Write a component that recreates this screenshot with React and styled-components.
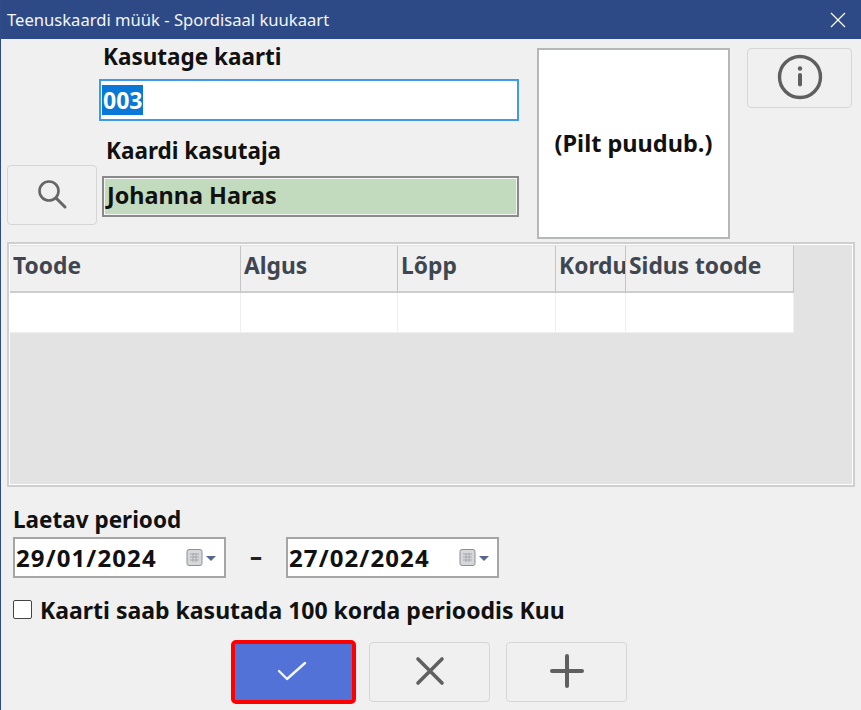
import React from "react";
import styled, { createGlobalStyle } from "styled-components";

const Global = createGlobalStyle`
  html, body { margin: 0; padding: 0; background: #f0f0f0; }
  body { font-family: "Noto Sans", "Liberation Sans", sans-serif; }
`;

const Win = styled.div`
  width: 861px; height: 710px; box-sizing: border-box; overflow: hidden;
  background: #f0f0f0; border-left: 1px solid #2f4b88;
  display: flex; flex-direction: column;
`;
const TitleBar = styled.div`
  height: 39px; flex: none; background: #2d4a87; color: #f4f6fa;
  display: flex; align-items: center; justify-content: space-between;
  padding: 0 15px 0 6px; font-size: 16.6px; box-sizing: border-box;
`;
const Close = styled.svg`width: 16px; height: 16px; display: block;`;
const Top = styled.div`
  display: flex; height: 203px; flex: none; padding: 9px 0 0 6px; box-sizing: border-box;
`;
const SearchCol = styled.div`
  width: 92px; flex: none; display: flex; flex-direction: column; justify-content: flex-end; padding-bottom: 17px;
`;
const IconButton = styled.button`
  box-sizing: border-box; width: ${p => p.$w}px; height: ${p => p.$h}px; flex: none;
  background: #f0f0f0; border: 1px solid #d6d6d6; border-radius: 4px; padding: 0 0 2px;
  display: flex; align-items: center; justify-content: center;
`;
const AddButton = styled(IconButton)`margin-left: 3px;`;
const FormCol = styled.div`
  width: 420px; flex: none; display: flex; flex-direction: column;
`;
const Label = styled.div`
  font-weight: 700; font-size: 22.5px; line-height: 18px; color: #111; padding-left: ${p => p.$pad}px;
  height: ${p => p.$h}px; margin-top: ${p => p.$mt || 0}px; white-space: nowrap;
`;
const CardInput = styled.div`
  box-sizing: border-box; height: 42px; background: #fff; border: 2px solid #3f9bea;
  display: flex; align-items: center; padding-left: 1px;
  font-weight: 700; font-size: 23px; color: #111;
`;
const Selected = styled.span`background: #0a78d7; color: #fff; line-height: 30px; padding: 0 1px;`;
const UserField = styled.div`
  box-sizing: border-box; height: 41px; margin-left: 3px; background: #c2dbbf; border: 2px solid #8a8a8a;
  box-shadow: inset 0 0 0 1px #f4f4f4;
  display: flex; align-items: center; padding: 0 0 3px 3px;
  font-weight: 700; font-size: 23.4px; color: #111;
`;
const Picture = styled.div`
  box-sizing: border-box; width: 193px; height: 191px; flex: none; margin-left: 18px; background: #fff;
  border: 2px solid #b5b7b8; display: flex; align-items: center; justify-content: center;
  font-weight: 700; font-size: 23.5px; color: #111; padding-bottom: 2px; white-space: nowrap;
`;
const InfoWrap = styled.div`margin-left: 17px; flex: none;`;

const Grid = styled.div`
  box-sizing: border-box; margin-left: 6px; width: 848px; height: 245px; flex: none;
  background: #e3e3e3; border: 2px solid #cfcfcf; box-shadow: inset 0 0 0 1px #fff; padding: 2px 0 0 1px;
`;
const HeadRow = styled.div`display: flex; height: 47px; width: 784px;`;
const HeadCell = styled.div`
  box-sizing: border-box; width: ${p => p.$w}px; flex: none; overflow: hidden; white-space: nowrap;
  background: #f0f0f0; border-right: 1px solid #c4c4c4; border-bottom: 2px solid #cdcdcd;
  font-weight: 700; font-size: 22.8px; line-height: 39px; color: #3f4650; padding-left: 3px;
`;
const BodyRow = styled.div`display: flex; height: 39px; width: 784px; border-bottom: 1px solid #efefef;`;
const BodyCell = styled.div`
  box-sizing: border-box; width: ${p => p.$w}px; flex: none; background: #fff; border-right: 1px solid #efefef;
`;

const Bottom = styled.div`
  display: flex; flex-direction: column; padding: 18px 0 0 12px; flex: 1;
`;
const PeriodLabel = styled.div`
  font-weight: 700; font-size: 22.5px; line-height: 30px; height: 32px; color: #111; white-space: nowrap;
`;
const Dates = styled.div`display: flex; align-items: center; height: 41px;`;
const DateField = styled.div`
  box-sizing: border-box; width: 213px; height: 41px; background: #fff; border: 2px solid #a5a5a5;
  display: flex; align-items: center; justify-content: space-between; padding: 0 8px 0 1px;
  font-weight: 700; font-size: 24px; letter-spacing: 1.1px; color: #111;
`;
const Dash = styled.div`
  width: 60px; text-align: center; font-weight: 800; font-size: 24px; color: #222; padding-bottom: 5px;
`;
const CheckRow = styled.div`
  display: flex; align-items: center; margin-top: 20px; height: 23px;
  font-weight: 700; font-size: 23px; color: #111; white-space: nowrap;
`;
const Box = styled.div`
  box-sizing: border-box; width: 19px; height: 19px; background: #fff; border: 1.5px solid #444;
  border-radius: 2px; margin-right: 8px; flex: none;
`;
const Actions = styled.div`
  display: flex; align-items: center; gap: 13px; padding-left: 218px; margin-top: 19px;
`;
const OkButton = styled.button`
  box-sizing: border-box; width: 125px; height: 64px; background: #5272d8; border: 4px solid #f00;
  border-radius: 5px; padding: 0 4px 3px 0; display: flex; align-items: center; justify-content: center;
`;
const CalIcon = () => (
  <svg width="30" height="20" viewBox="0 0 30 20">
    <rect x="1" y="1.5" width="15" height="16" rx="2" fill="#d5d7da" stroke="#8d8f92" />
    <path d="M4 6h9M4 9h9M4 12h9M7 5v9M10 5v9" stroke="#a6a8ab" strokeWidth="1" />
    <path d="M20 8h10l-5 5z" fill="#55688c" />
  </svg>
);

const cols = [
  ["Toode", 231], ["Algus", 157], ["Lõpp", 158], ["Kordu", 70], ["Sidus toode", 168],
];

export default function App() {
  return (
    <Win>
      <Global />
      <TitleBar>
        <span>Teenuskaardi müük - Spordisaal kuukaart</span>
        <Close viewBox="0 0 16 16"><path d="M1 1l14 14M15 1L1 15" stroke="#fff" strokeWidth="1.2" /></Close>
      </TitleBar>
      <Top>
        <SearchCol>
          <IconButton $w={90} $h={60}>
            <svg width="32" height="32" viewBox="0 0 32 32" fill="none" stroke="#666" strokeLinecap="round">
              <circle cx="13" cy="13" r="9.5" strokeWidth="2.6" />
              <path d="M20 20l9 9" strokeWidth="3" />
            </svg>
          </IconButton>
        </SearchCol>
        <FormCol>
          <Label $pad={4} $h={31}>Kasutage kaarti</Label>
          <CardInput><Selected>003</Selected></CardInput>
          <Label $pad={7} $h={34} $mt={21}>Kaardi kasutaja</Label>
          <UserField>Johanna Haras</UserField>
        </FormCol>
        <Picture>(Pilt puudub.)</Picture>
        <InfoWrap>
          <IconButton $w={105} $h={60}>
            <svg width="46" height="46" viewBox="0 0 46 46" fill="none">
              <circle cx="23" cy="23" r="20.5" stroke="#5f5f5f" strokeWidth="3.4" />
              <circle cx="23" cy="14.5" r="2.2" fill="#5f5f5f" />
              <path d="M23 21v9.5" stroke="#5f5f5f" strokeWidth="4" strokeLinecap="round" />
            </svg>
          </IconButton>
        </InfoWrap>
      </Top>
      <Grid>
        <HeadRow>
          {cols.map(([t, w]) => <HeadCell key={t} $w={w}>{t}</HeadCell>)}
        </HeadRow>
        <BodyRow>
          {cols.map(([t, w]) => <BodyCell key={t} $w={w} />)}
        </BodyRow>
      </Grid>
      <Bottom>
        <PeriodLabel>Laetav periood</PeriodLabel>
        <Dates>
          <DateField>29/01/2024<CalIcon /></DateField>
          <Dash>–</Dash>
          <DateField>27/02/2024<CalIcon /></DateField>
        </Dates>
        <CheckRow><Box />Kaarti saab kasutada 100 korda perioodis Kuu</CheckRow>
        <Actions>
          <OkButton>
            <svg width="30" height="22" viewBox="0 0 30 22" fill="none" stroke="#f4f6fd" strokeWidth="2.4" strokeLinecap="round" strokeLinejoin="round">
              <path d="M2 11l8 8L28 3" />
            </svg>
          </OkButton>
          <IconButton $w={121} $h={60}>
            <svg width="30" height="30" viewBox="0 0 30 30" fill="none" stroke="#606060" strokeWidth="3.6" strokeLinecap="round">
              <path d="M3 3l24 24M27 3L3 27" />
            </svg>
          </IconButton>
          <AddButton $w={121} $h={60}>
            <svg width="34" height="34" viewBox="0 0 34 34" fill="none" stroke="#606060" strokeWidth="4" strokeLinecap="round">
              <path d="M17 2v30M2 17h30" />
            </svg>
          </AddButton>
        </Actions>
      </Bottom>
    </Win>
  );
}
